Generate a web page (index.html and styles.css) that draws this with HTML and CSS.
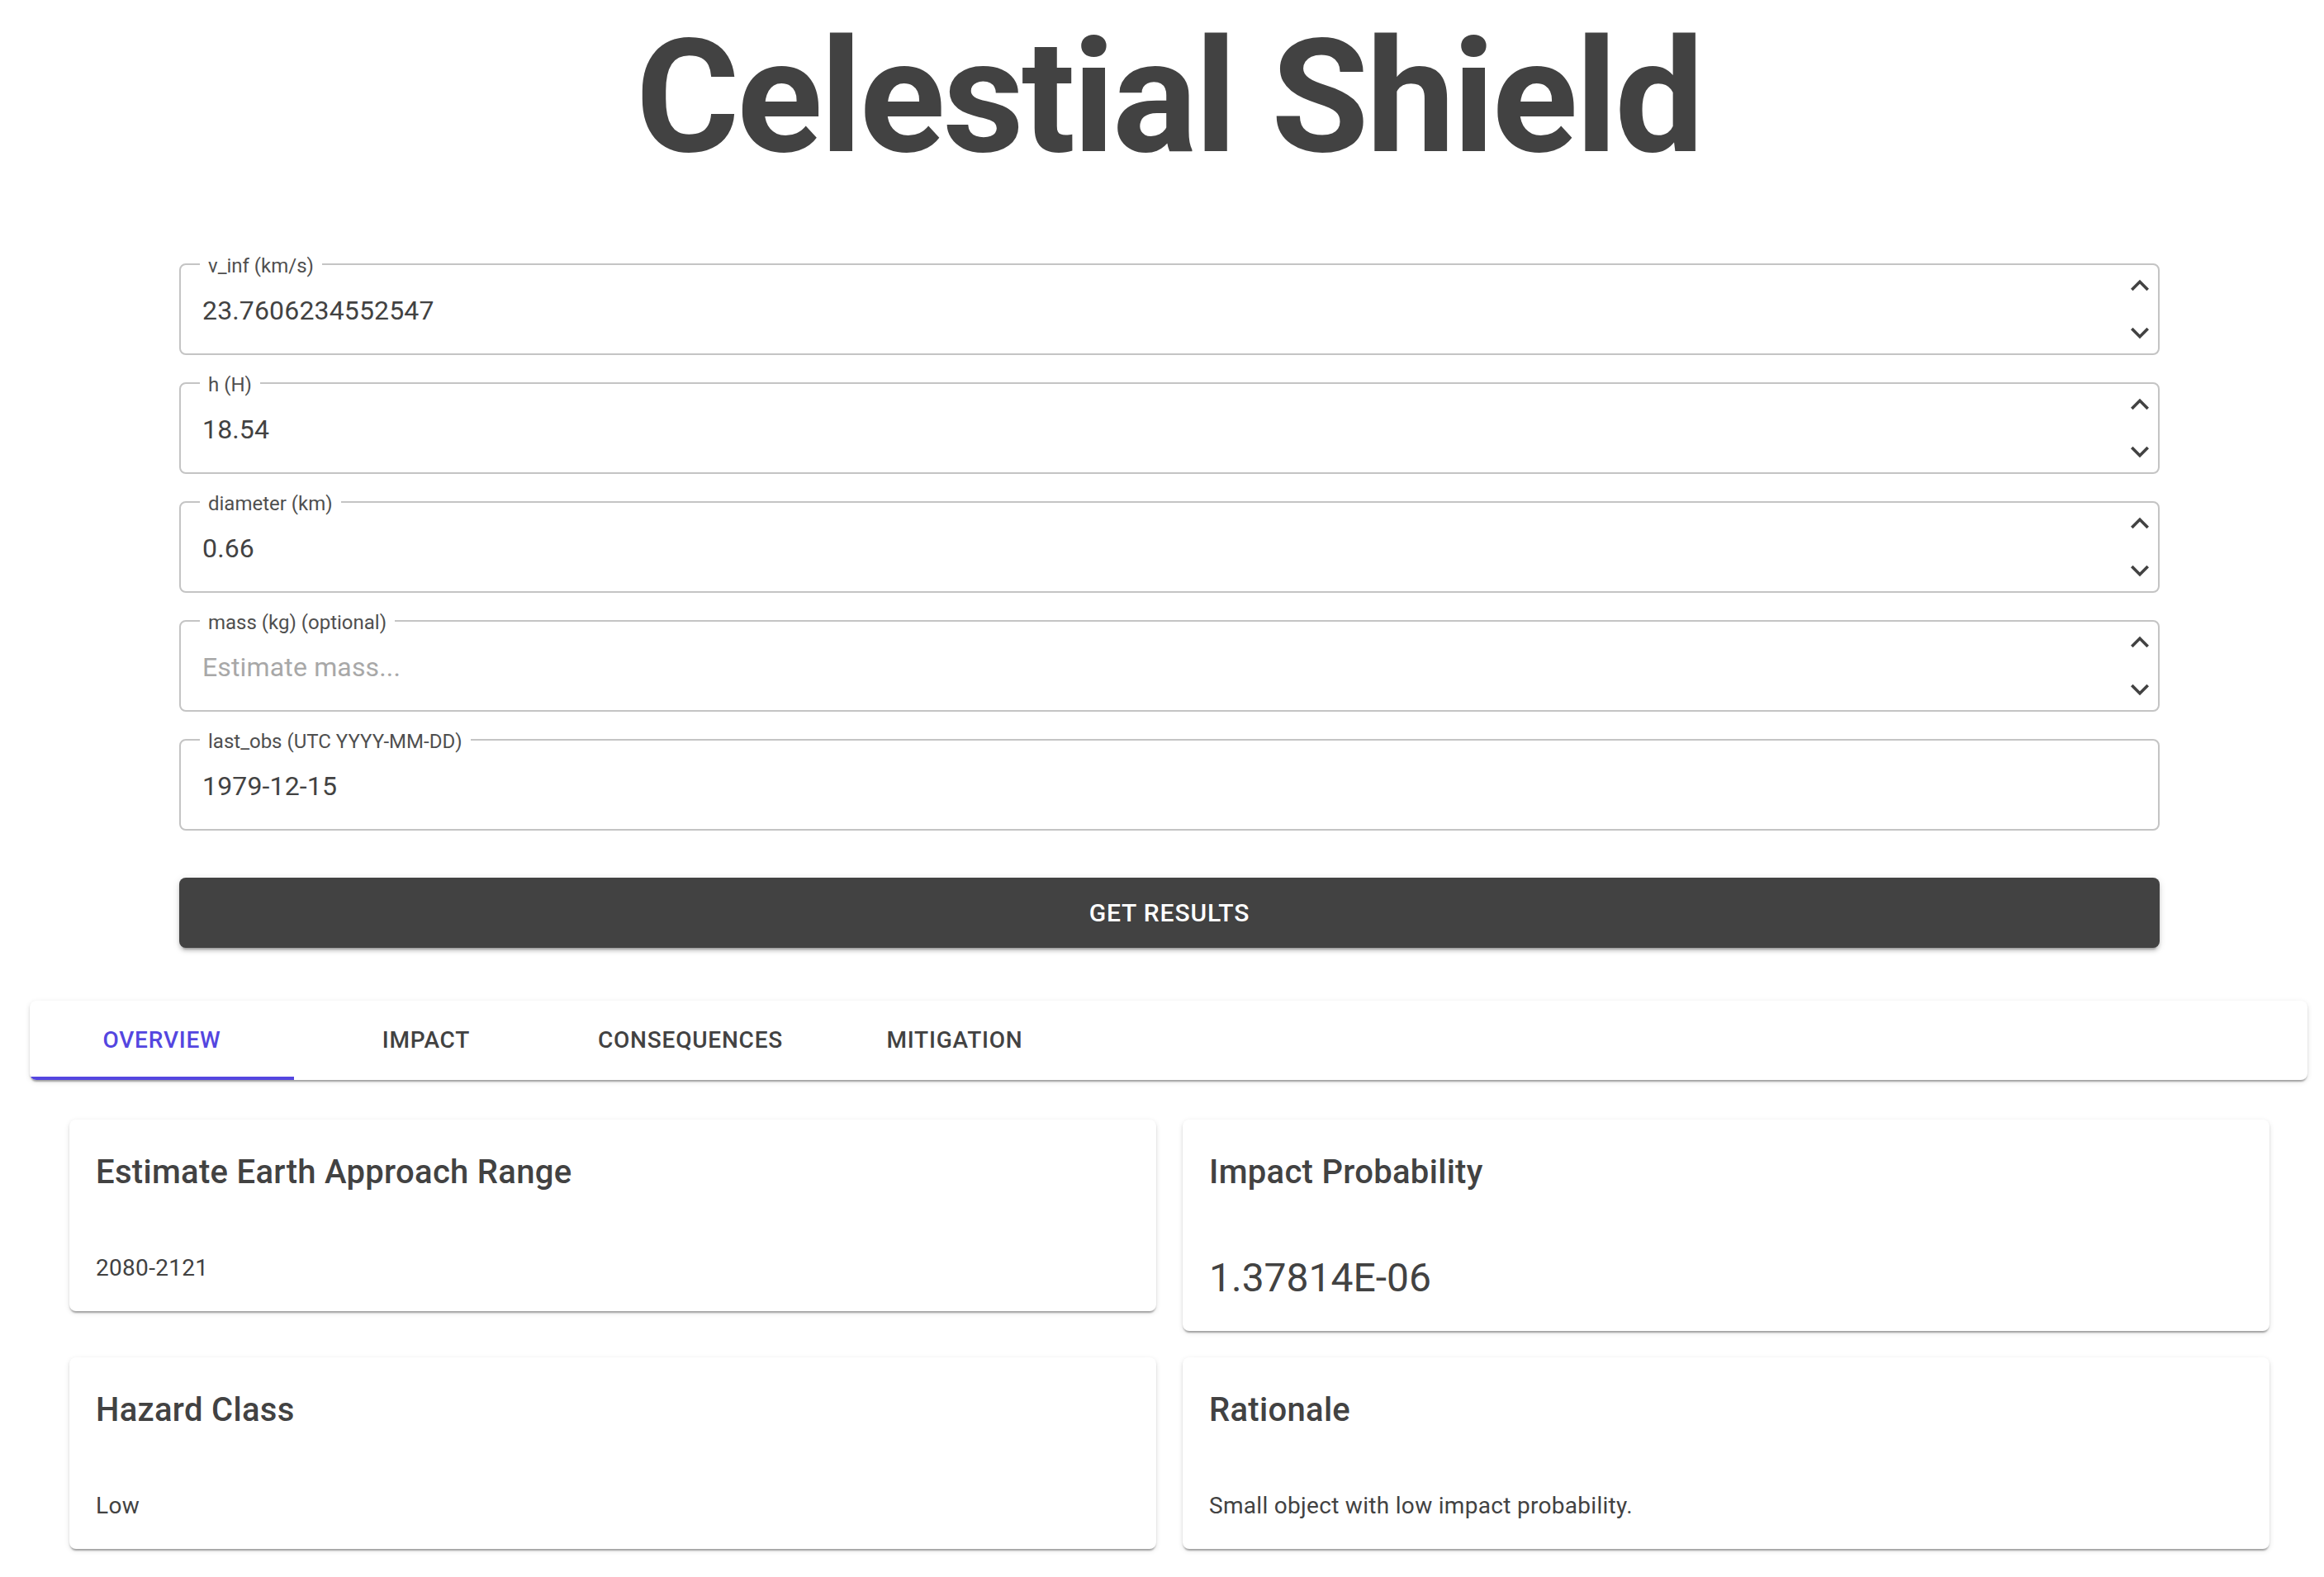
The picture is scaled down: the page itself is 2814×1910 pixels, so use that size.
FILE: index.html
```html
<!DOCTYPE html>
<html lang="en">
<head>
<meta charset="utf-8">
<title>Celestial Shield</title>
<link rel="stylesheet" href="styles.css">
</head>
<body>
<div class="page">
  <h1 class="title">Celestial Shield</h1>

  <form class="form">
    <div class="field">
      <span class="label">v_inf (km/s)</span>
      <div class="value">23.7606234552547</div>
      <div class="stepper">
        <svg class="chev" viewBox="0 0 24 24"><path d="M7.41 15.41 12 10.83l4.59 4.58L18 14l-6-6-6 6z"/></svg>
        <svg class="chev" viewBox="0 0 24 24"><path d="M7.41 8.59 12 13.17l4.59-4.58L18 10l-6 6-6-6 1.41-1.41z"/></svg>
      </div>
    </div>
    <div class="field">
      <span class="label">h (H)</span>
      <div class="value">18.54</div>
      <div class="stepper">
        <svg class="chev" viewBox="0 0 24 24"><path d="M7.41 15.41 12 10.83l4.59 4.58L18 14l-6-6-6 6z"/></svg>
        <svg class="chev" viewBox="0 0 24 24"><path d="M7.41 8.59 12 13.17l4.59-4.58L18 10l-6 6-6-6 1.41-1.41z"/></svg>
      </div>
    </div>
    <div class="field">
      <span class="label">diameter (km)</span>
      <div class="value">0.66</div>
      <div class="stepper">
        <svg class="chev" viewBox="0 0 24 24"><path d="M7.41 15.41 12 10.83l4.59 4.58L18 14l-6-6-6 6z"/></svg>
        <svg class="chev" viewBox="0 0 24 24"><path d="M7.41 8.59 12 13.17l4.59-4.58L18 10l-6 6-6-6 1.41-1.41z"/></svg>
      </div>
    </div>
    <div class="field">
      <span class="label">mass (kg) (optional)</span>
      <div class="value placeholder">Estimate mass...</div>
      <div class="stepper">
        <svg class="chev" viewBox="0 0 24 24"><path d="M7.41 15.41 12 10.83l4.59 4.58L18 14l-6-6-6 6z"/></svg>
        <svg class="chev" viewBox="0 0 24 24"><path d="M7.41 8.59 12 13.17l4.59-4.58L18 10l-6 6-6-6 1.41-1.41z"/></svg>
      </div>
    </div>
    <div class="field">
      <span class="label">last_obs (UTC YYYY-MM-DD)</span>
      <div class="value">1979-12-15</div>
    </div>

    <button type="button" class="submit">Get Results</button>
  </form>

  <nav class="tabs">
    <div class="tab active">Overview</div>
    <div class="tab">Impact</div>
    <div class="tab">Consequences</div>
    <div class="tab">Mitigation</div>
  </nav>

  <section class="panel">
    <div class="card">
      <h2 class="card-title">Estimate Earth Approach Range</h2>
      <p class="card-body">2080-2121</p>
    </div>
    <div class="card">
      <h2 class="card-title">Impact Probability</h2>
      <p class="card-big">1.37814E-06</p>
    </div>
    <div class="card">
      <h2 class="card-title">Hazard Class</h2>
      <p class="card-body">Low</p>
    </div>
    <div class="card">
      <h2 class="card-title">Rationale</h2>
      <p class="card-body">Small object with low impact probability.</p>
    </div>
  </section>
</div>
</body>
</html>
```

FILE: styles.css
```css
* { box-sizing: border-box; }

html, body {
  margin: 0;
  padding: 0;
  background: #ffffff;
}

body {
  font-family: Roboto, "Liberation Sans", Arial, sans-serif;
  color: #424242;
}

.page {
  padding: 0 20px 40px 36px;
}

.title {
  margin: 6px 0 0 0;
  font-size: 192px;
  line-height: 224px;
  font-weight: 700;
  text-align: center;
  color: #424242;
  letter-spacing: -3px;
}

.form {
  width: 2398px;
  margin: 89px 0 0 181px;
  display: flex;
  flex-direction: column;
}

.field {
  position: relative;
  height: 111px;
  border: 2px solid #c4c4c4;
  border-radius: 8px;
  display: flex;
  align-items: flex-start;
  margin-bottom: 33px;
}

.field:last-of-type { margin-bottom: 0; }

.label {
  position: absolute;
  top: -11px;
  left: 23px;
  padding: 0 10px;
  background: #ffffff;
  font-size: 24px;
  line-height: 24px;
  color: #4f4f4f;
  white-space: nowrap;
}

.value {
  flex: 1;
  padding: 32px 0 0 26px;
  font-size: 32px;
  line-height: 46px;
  color: #424242;
  letter-spacing: 0.15px;
}

.value.placeholder { color: #a8a8a8; }

.stepper {
  display: flex;
  flex-direction: column;
  gap: 13px;
  margin-top: 3px;
  margin-right: 0;
}

.chev {
  width: 44px;
  height: 44px;
  display: block;
  fill: #424242;
}

.submit {
  margin-top: 57px;
  height: 85px;
  width: 100%;
  border: none;
  border-radius: 8px;
  background: #424242;
  color: #ffffff;
  font-family: Roboto, "Liberation Sans", Arial, sans-serif;
  font-size: 30px;
  font-weight: 500;
  letter-spacing: 0.86px;
  text-transform: uppercase;
  box-shadow: 0 6px 2px -4px rgba(0,0,0,0.2), 0 4px 4px 0 rgba(0,0,0,0.14), 0 2px 10px 0 rgba(0,0,0,0.12);
}

.tabs {
  margin-top: 64px;
  height: 96px;
  display: flex;
  background: #ffffff;
  border-radius: 8px;
  overflow: hidden;
  box-shadow: 0 4px 2px -2px rgba(0,0,0,0.2), 0 2px 2px 0 rgba(0,0,0,0.14), 0 2px 6px 0 rgba(0,0,0,0.12);
}

.tab {
  width: 320px;
  display: flex;
  align-items: center;
  justify-content: center;
  font-size: 28px;
  font-weight: 500;
  letter-spacing: 0.8px;
  text-transform: uppercase;
  color: #424242;
  border-bottom: 4px solid transparent;
  padding-top: 2px;
}

.tab.active {
  color: #5446e0;
  border-bottom-color: #5446e0;
}

.panel {
  margin-top: 48px;
  padding: 0 46px 0 48px;
  display: grid;
  grid-template-columns: 1fr 1fr;
  gap: 32px;
  align-items: start;
}

.card {
  background: #ffffff;
  border-radius: 8px;
  padding: 32px;
  box-shadow: 0 4px 2px -2px rgba(0,0,0,0.2), 0 2px 2px 0 rgba(0,0,0,0.14), 0 2px 6px 0 rgba(0,0,0,0.12);
}

.card-title {
  margin: 0 0 64px 0;
  font-size: 40px;
  line-height: 64px;
  font-weight: 500;
  letter-spacing: 0.3px;
  color: #424242;
}

.card-body {
  margin: 0;
  font-size: 28px;
  line-height: 40px;
  letter-spacing: 0.3px;
  color: #424242;
}

.card-big {
  margin: 0;
  font-size: 48px;
  line-height: 64px;
  color: #424242;
}
```
